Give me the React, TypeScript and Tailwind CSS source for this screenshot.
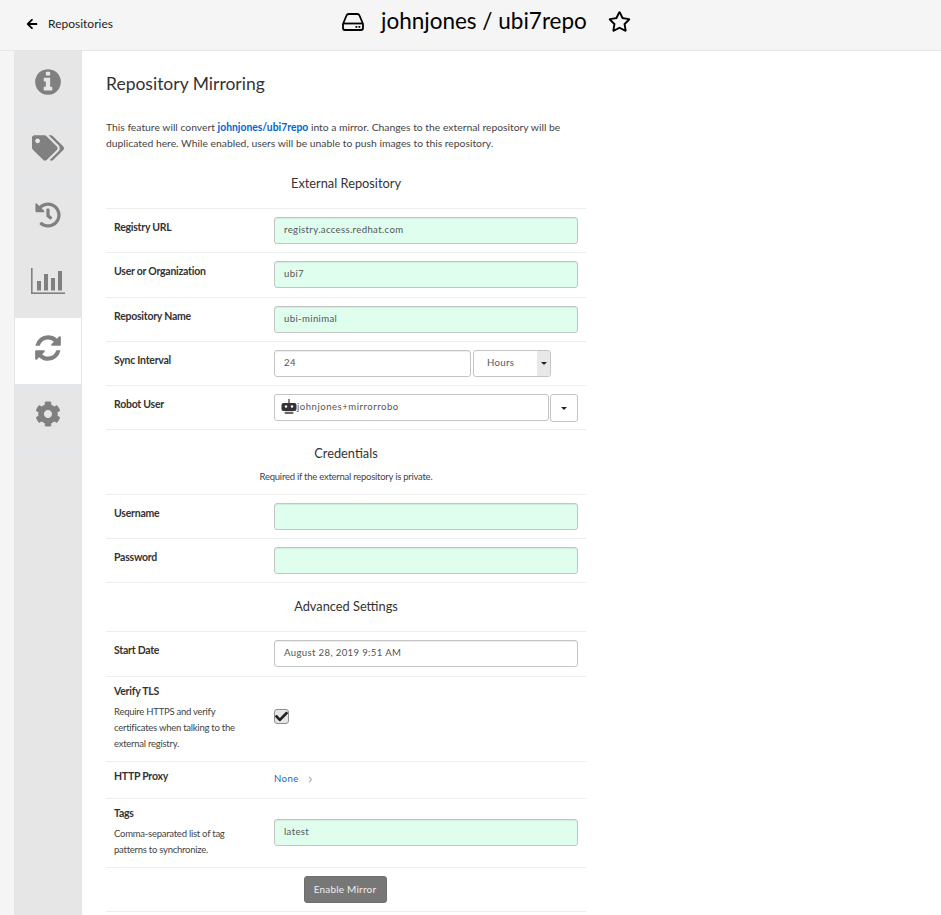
import type { ReactNode } from 'react';
import { FaArrowLeft, FaCheck, FaChevronRight, FaCog, FaHistory, FaRegStar, FaTags } from 'react-icons/fa';

function ChartIcon() {
  return (
    <svg width="34" height="26" viewBox="0 0 34 26" fill="#808080">
      <rect x="0" y="0" width="1.6" height="26" />
      <rect x="0" y="24.4" width="34" height="1.6" />
      <rect x="6" y="13" width="4" height="9.5" />
      <rect x="13" y="6" width="4" height="16.5" />
      <rect x="20" y="10" width="4" height="12.5" />
      <rect x="27" y="3" width="4" height="19.5" />
    </svg>
  );
}

function InfoIcon() {
  return (
    <svg width="30" height="30" viewBox="0 0 1792 1792" fill="#808080">
      <path d="M1152 1376v-160q0-14-9-23t-23-9h-96v-512q0-14-9-23t-23-9h-320q-14 0-23 9t-9 23v160q0 14 9 23t23 9h96v320h-96q-14 0-23 9t-9 23v160q0 14 9 23t23 9h448q14 0 23-9t9-23zm-128-896v-160q0-14-9-23t-23-9h-192q-14 0-23 9t-9 23v160q0 14 9 23t23 9h192q14 0 23-9t9-23zm640 416q0 209-103 385.5t-279.5 279.5-385.5 103-385.5-103-279.5-279.5-103-385.5 103-385.5 279.5-279.5 385.5-103 385.5 103 279.5 279.5 103 385.5z" />
    </svg>
  );
}

function RefreshIcon() {
  return (
    <svg width="30" height="30" viewBox="0 0 1792 1792" fill="#808080">
      <path d="M1639 1056q0 5-1 7-64 268-268 434.5t-478 166.5q-146 0-282.5-55t-243.5-157l-129 129q-19 19-45 19t-45-19-19-45v-448q0-26 19-45t45-19h448q26 0 45 19t19 45-19 45l-137 137q71 66 161 102t187 36q134 0 250-65t186-179q11-17 53-117 8-23 30-23h192q13 0 22.5 9.5t9.5 22.5zm25-800v448q0 26-19 45t-45 19h-448q-26 0-45-19t-19-45 19-45l138-138q-148-137-349-137-134 0-250 65t-186 179q-11 17-53 117-8 23-30 23h-199q-13 0-22.5-9.5t-9.5-22.5v-7q65-268 270-434.5t480-166.5q146 0 284 55.5t245 156.5l130-129q19-19 45-19t45 19 19 45z" />
    </svg>
  );
}

function DriveIcon() {
  return (
    <svg width="22" height="18" viewBox="0 0 22 18" fill="none" stroke="#000" strokeWidth="1.8">
      <path d="M1 11 L4.5 2.5 Q5 1 7 1 H15 Q17 1 17.5 2.5 L21 11 V15 Q21 17 19 17 H3 Q1 17 1 15 Z" strokeLinejoin="round" />
      <path d="M1 10.5 H21" />
      <rect x="13.5" y="13" width="1.8" height="1.8" fill="#000" stroke="none" />
      <rect x="16.5" y="13" width="1.8" height="1.8" fill="#000" stroke="none" />
    </svg>
  );
}

function RobotIcon() {
  return (
    <svg width="16" height="16" viewBox="0 0 16 16" className="mt-[4px] shrink-0">
      <rect x="7.4" y="0" width="1.2" height="4" fill="#333333" />
      <rect x="0.5" y="4" width="15" height="8" rx="2" fill="#333333" />
      <circle cx="5" cy="7.5" r="1.2" fill="#ffffff" />
      <circle cx="11" cy="7.5" r="1.2" fill="#ffffff" />
      <rect x="3.5" y="12.8" width="9" height="2.2" rx="1" fill="#666666" />
    </svg>
  );
}

const tabs = [
  { icon: <InfoIcon />, active: false },
  { icon: <FaTags size={32} />, active: false },
  { icon: <FaHistory size={26} />, active: false },
  { icon: <ChartIcon />, active: false },
  { icon: <RefreshIcon />, active: true },
  { icon: <FaCog size={26} />, active: false },
];

function Row({ label, help, height, top = 'pt-[8px]', children }: { label: string; help?: ReactNode; height: string; top?: string; children?: ReactNode }) {
  return (
    <div className={`flex border-b border-[#eeeeee] pl-2 ${height}`}>
      <div className={`w-[160px] shrink-0 ${top}`}>
        <div className="text-[10.5px] leading-[20px] tracking-[-0.25px] font-bold text-[#333333]">{label}</div>
        {help && <div className="text-[9.5px] leading-[16px] tracking-[-0.25px] text-[#444444] mt-[3px] w-[135px]">{help}</div>}
      </div>
      <div className="flex-1 min-w-0">{children}</div>
    </div>
  );
}

function TextBox({ value, green = true, mt = 'mt-[8px]', width = 'w-[304px]' }: { value?: string; green?: boolean; mt?: string; width?: string }) {
  return (
    <div className={`${mt} ${width} h-[27px] rounded-[3px] border border-[#c4c4c4] pl-[9px] text-[9.6px] leading-[23px] tracking-[0.35px] text-[#555555] shadow-[inset_0_1px_1px_rgba(0,0,0,0.075)] ${green ? 'bg-[#dffeee]' : 'bg-white'}`}>
      {value}
    </div>
  );
}

function SectionTitle({ children, className }: { children: ReactNode; className: string }) {
  return <div className={`text-center text-[12.8px] text-[#333333] ${className}`}>{children}</div>;
}

export default function App() {
  return (
    <div className="w-[941px] h-[915px] overflow-hidden bg-white font-['Lato',sans-serif]">
      {/* Header */}
      <header className="relative flex h-[51px] items-center bg-[#f5f5f5] border-b border-[#e6e6e6]">
        <div className="flex items-center pl-[26px] -mt-[3px]">
          <FaArrowLeft size={12} color="#000" />
          <span className="ml-[10px] text-[12px] text-[#222222] leading-none">Repositories</span>
        </div>
        <div className="absolute left-[342px] top-0 flex h-[43px] items-center text-black">
          <DriveIcon />
          <span className="ml-[17px] text-[22.5px] leading-none">johnjones / ubi7repo</span>
          <FaRegStar size={23} className="ml-[21px] -mt-[1px]" />
        </div>
      </header>

      <div className="flex h-[864px] bg-white">
        <div className="w-[14px] bg-[#f5f5f5]" />
        {/* Tabs */}
        <nav className="w-[68px] shrink-0 bg-[#e6e6e6] px-px pt-px">
          {tabs.map((tab, i) => (
            <div
              key={i}
              className={`flex h-[66.5px] items-center justify-center border-b border-[#e0e8ee] pb-[6px] text-[#808080] ${tab.active ? 'bg-white' : ''}`}
            >
              {tab.icon}
            </div>
          ))}
        </nav>

        {/* Content */}
        <main className="ml-[24px] w-[480px] shrink-0">
          <h2 className="mt-[21px] text-[17.5px] leading-[24px] text-[#333333]">Repository Mirroring</h2>
          <p className="mt-[23px] w-[470px] text-[10.35px] leading-[16px] text-[#444444]">
            This feature will convert <span className="font-bold text-[#0066cc]">johnjones/ubi7repo</span> into a mirror. Changes to the external repository will be duplicated here. While enabled, users will be unable to push images to this repository.
          </p>

          <SectionTitle className="mt-[23px] mb-[16px] leading-[18px]">External Repository</SectionTitle>
          <div className="border-t border-[#eeeeee]">
            <Row label="Registry URL" height="h-[44px]"><TextBox value="registry.access.redhat.com" /></Row>
            <Row label="User or Organization" height="h-[45px]"><TextBox value="ubi7" /></Row>
            <Row label="Repository Name" height="h-[44px]"><TextBox value="ubi-minimal" /></Row>
            <Row label="Sync Interval" height="h-[44px]">
              <div className="mt-[8px] flex gap-[2px]">
                <TextBox value="24" green={false} mt="mt-0" width="w-[197px]" />
                <div className="flex h-[27px] w-[78px] rounded-[3px] border border-[#c4c4c4] bg-white">
                  <span className="flex-1 pl-[13px] text-[9.6px] leading-[23px] tracking-[0.35px] text-[#555555]">Hours</span>
                  <span className="flex w-[13px] items-center justify-center rounded-r-[3px] bg-[#e8e8e8]">
                    <span className="border-x-[3px] border-t-[3px] border-x-transparent border-t-[#222222]" />
                  </span>
                </div>
              </div>
            </Row>
            <Row label="Robot User" height="h-[44px]">
              <div className="mt-[8px] flex gap-px">
                <div className="flex h-[27px] w-[275px] rounded-[3px] border border-[#c4c4c4] bg-white pl-[6px] text-[9.6px] leading-[23px] tracking-[0.5px] text-[#555555]">
                  <RobotIcon />
                  <span>johnjones+mirrorrobo</span>
                </div>
                <div className="flex h-[28px] w-[28px] items-center justify-center rounded-[3px] border border-[#c4c4c4] bg-white">
                  <span className="border-x-[3px] border-t-[3px] border-x-transparent border-t-[#222222]" />
                </div>
              </div>
            </Row>
          </div>

          <SectionTitle className="mt-[14px] leading-[18px]">Credentials</SectionTitle>
          <div className="mt-[7px] mb-[9px] text-center text-[9.5px] leading-[16px] tracking-[-0.25px] text-[#444444]">Required if the external repository is private.</div>
          <div className="border-t border-[#eeeeee]">
            <Row label="Username" height="h-[44px]"><TextBox /></Row>
            <Row label="Password" height="h-[44px]"><TextBox /></Row>
          </div>

          <SectionTitle className="mt-[14px] mb-[16px] leading-[18px]">Advanced Settings</SectionTitle>
          <div className="border-t border-[#eeeeee]">
            <Row label="Start Date" height="h-[45px]"><TextBox value="August 28, 2019 9:51 AM" green={false} /></Row>
            <Row
              label="Verify TLS"
              help="Require HTTPS and verify certificates when talking to the external registry."
              height="h-[85px]"
              top="pt-[4px]"
            >
              <div className="mt-[32px] flex h-[15px] w-[15px] items-center justify-center rounded-[3px] border border-[#8f8f8f] bg-[#e6e6e6]">
                <FaCheck size={13} color="#222" />
              </div>
            </Row>
            <Row label="HTTP Proxy" height="h-[37px]" top="pt-[4px]">
              <div className="mt-[9px] flex items-center text-[9.6px] leading-[16px] tracking-[0.4px] text-[#1f66b5]">
                None
                <FaChevronRight size={7} color="#b5b5b5" className="ml-[8px] mt-px" />
              </div>
            </Row>
            <Row label="Tags" help="Comma-separated list of tag patterns to synchronize." height="h-[69px]" top="pt-[4px]">
              <TextBox value="latest" mt="mt-[20px]" />
            </Row>
            <div className="flex h-[44px] justify-center border-b border-[#eeeeee] pt-[8px] pr-[2px]">
              <div className="h-[27px] w-[83px] rounded-[3px] border border-[#6e6e6e] bg-[#777777] text-center text-[10px] leading-[25px] tracking-[0.2px] text-[#eeeeee]">Enable Mirror</div>
            </div>
          </div>
        </main>
      </div>
    </div>
  );
}
